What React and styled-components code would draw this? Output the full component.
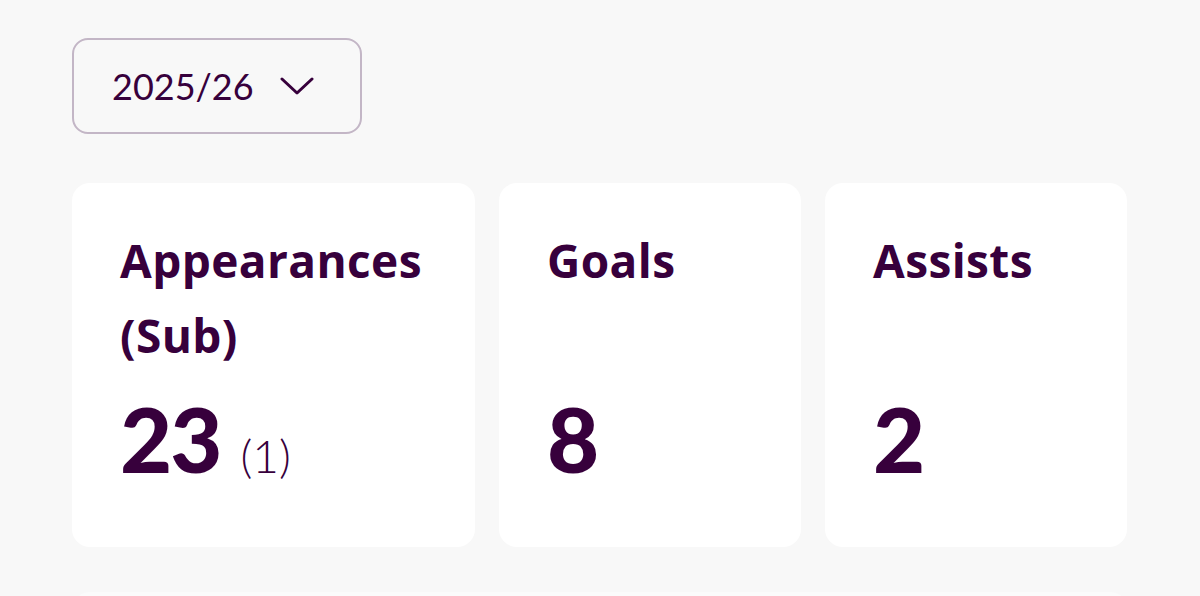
import React from "react";
import styled, { createGlobalStyle } from "styled-components";

const Global = createGlobalStyle`
  html, body { margin: 0; padding: 0; background: #f8f8f8; }
  body { font-family: Lato, "Noto Sans", sans-serif; color: #37003c; }
`;

const Page = styled.div`
  width: 1200px;
  height: 596px;
  overflow: hidden;
  box-sizing: border-box;
  padding: 38px 72px 0 72px;
`;

const SeasonButton = styled.button`
  box-sizing: border-box;
  width: 290px;
  height: 96px;
  border: 2px solid #c3b6c6;
  border-radius: 16px;
  background: #f8f8f8;
  display: flex;
  align-items: center;
  gap: 26px;
  padding: 0 0 0 38px;
  font-family: Lato, "Noto Sans", sans-serif;
  font-size: 36px;
  font-weight: 400;
  color: #37003c;
  cursor: pointer;
`;

const Cards = styled.div`
  margin-top: 49px;
  display: grid;
  grid-template-columns: 403px 302px 302px;
  gap: 24px;
`;

const Card = styled.div`
  box-sizing: border-box;
  height: 364px;
  background: #ffffff;
  border-radius: 18px;
  padding: 40px 48px 0 48px;
  display: flex;
  flex-direction: column;
`;

const Label = styled.div`
  font-family: "Open Sans", Lato, sans-serif;
  font-size: 46px;
  font-weight: 700;
  letter-spacing: 0.4px;
  line-height: 75px;
  min-height: 150px;
`;

const Value = styled.div`
  margin-top: 20px;
  display: flex;
  align-items: baseline;
  gap: 20px;
  line-height: 1;
`;

const Number = styled.span`
  font-size: 90px;
  font-weight: 900;
  letter-spacing: -2px;
`;

const Sub = styled.span`
  font-size: 46px;
  font-weight: 300;
`;

const NextCard = styled.div`
  margin-top: 45px;
  width: 1056px;
  height: 40px;
  background: #fbfbfb;
  border-radius: 18px;
`;

const Chevron = () => (
  <svg width="34" height="22" viewBox="0 0 34 22" fill="none">
    <path d="M2 4 L17 18 L32 4" stroke="#37003c" strokeWidth="3" strokeLinecap="round" strokeLinejoin="round" />
  </svg>
);

const stats = [
  { label: "Appearances (Sub)", value: "23", sub: "(1)" },
  { label: "Goals", value: "8" },
  { label: "Assists", value: "2" },
];

export default function App() {
  return (
    <>
      <Global />
      <Page>
        <SeasonButton>
          <span>2025/26</span>
          <Chevron />
        </SeasonButton>
        <Cards>
          {stats.map((s) => (
            <Card key={s.label}>
              <Label>{s.label}</Label>
              <Value>
                <Number>{s.value}</Number>
                {s.sub && <Sub>{s.sub}</Sub>}
              </Value>
            </Card>
          ))}
        </Cards>
        <NextCard />
      </Page>
    </>
  );
}
